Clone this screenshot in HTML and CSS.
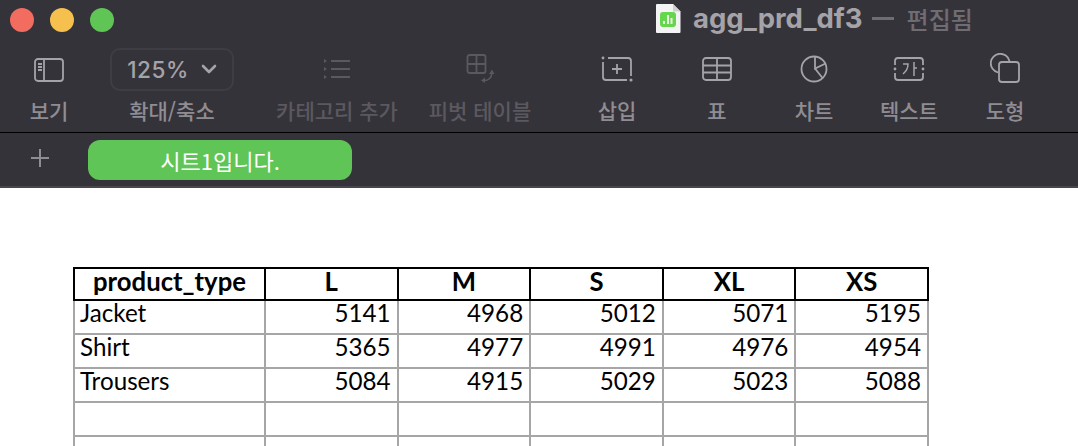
FILE: index.html
```html
<!DOCTYPE html>
<html lang="ko">
<head>
    <meta charset="utf-8">
    <title>agg_prd_df3</title>
    <link rel="stylesheet" href="styles.css">
</head>
<body>
    <header class="window-top">
        <div class="title-bar">
            <div class="lights">
                <span class="light red"></span>
                <span class="light yellow"></span>
                <span class="light green"></span>
            </div>
            <div class="doc-title">
                <svg class="doc-icon" width="25" height="29" viewBox="0 0 25 29">
                    <path d="M1 0H17L24.500 7.500V28a1 1 0 0 1-1 1H1a1 1 0 0 1-1-1V1a1 1 0 0 1 1-1Z" fill="#f4f4f4"/>
                    <path d="M17 0V7.500H24.500Z" fill="#d0d0d0"/>
                    <rect x="4" y="8" width="16" height="15" rx="3" fill="#66d64f"/>
                    <path d="M8 20v-3M12 20v-9M15.500 20v-6" stroke="#e8f8e0" stroke-width="2"/>
                </svg>
                <span class="doc-name">agg_prd_df3</span>
                <span class="doc-dash"></span>
                <span class="doc-state">편집됨</span>
            </div>
        </div>

        <div class="toolbar">
            <div class="tool tool-view">
                <svg width="30" height="24" viewBox="0 0 30 24" fill="none" stroke="currentColor" stroke-width="1.800">
                    <rect x="1" y="1" width="28" height="22" rx="3"/>
                    <path d="M10 1V23M4 6H8M4 9H8M4 12H8"/>
                </svg>
                <span class="tool-label">보기</span>
            </div>
            <div class="tool tool-zoom">
                <div class="zoom-box">125%
                    <svg width="16" height="11" viewBox="0 0 16 11" fill="none" stroke="currentColor" stroke-width="2.600" stroke-linecap="round" stroke-linejoin="round">
                        <path d="M2 2L8 8L14 2"/>
                    </svg>
                </div>
                <span class="tool-label">확대/축소</span>
            </div>
            <div class="tool tool-category off">
                <svg width="26" height="20" viewBox="0 0 26 20" fill="currentColor">
                    <path d="M0 0L3 2L0 4ZM0 8L3 10L0 12ZM0 16L3 18L0 20Z"/>
                    <rect x="7" y="1" width="19" height="2"/>
                    <rect x="7" y="9" width="19" height="2"/>
                    <rect x="7" y="17" width="19" height="2"/>
                </svg>
                <span class="tool-label">카테고리 추가</span>
            </div>
            <div class="tool tool-pivot off">
                <svg width="30" height="30" viewBox="0 0 30 30" fill="none" stroke="currentColor" stroke-width="1.800">
                    <rect x="2.500" y="1" width="18" height="18" rx="2"/>
                    <path d="M11.500 1V19M2.500 10H20.500"/>
                    <path d="M19 26.500Q26 26.500 27 19" stroke-width="1.600"/>
                    <path d="M24 20L27 15.500L29.500 20ZM20 23.500V29L16 26.500Z" fill="currentColor" stroke="none"/>
                </svg>
                <span class="tool-label">피벗 테이블</span>
            </div>
            <div class="tool tool-insert">
                <svg width="32" height="26" viewBox="0 0 32 26" fill="none" stroke="currentColor" stroke-width="1.800">
                    <path d="M2 6V21Q2 24 5 24H26M7 2H27Q30 2 30 5V20"/>
                    <path d="M16 8V18M11 13H21"/>
                    <circle cx="2" cy="2" r="1.400" fill="currentColor" stroke="none"/>
                    <circle cx="30" cy="24" r="1.600" fill="currentColor" stroke="none"/>
                </svg>
                <span class="tool-label">삽입</span>
            </div>
            <div class="tool tool-table">
                <svg width="30" height="24" viewBox="0 0 30 24" fill="none" stroke="currentColor" stroke-width="1.800">
                    <rect x="1" y="1" width="28" height="22" rx="3"/>
                    <path d="M1 8.500H29M1 15.500H29M15 1V23"/>
                </svg>
                <span class="tool-label">표</span>
            </div>
            <div class="tool tool-chart">
                <svg width="28" height="28" viewBox="0 0 28 28" fill="none" stroke="currentColor" stroke-width="1.800">
                    <circle cx="14" cy="14" r="12.500"/>
                    <path d="M15 2V13.500L25.500 8.500M15 13.500L22.500 23"/>
                </svg>
                <span class="tool-label">차트</span>
            </div>
            <div class="tool tool-text">
                <svg width="32" height="24" viewBox="0 0 32 24" fill="none" stroke="currentColor" stroke-width="1.800">
                    <path d="M2 8V4Q2 1 5 1H27Q30 1 30 4V8M2 16V20Q2 23 5 23H27Q30 23 30 20V16"/>
                    <circle cx="2" cy="12" r="1.400" fill="currentColor" stroke="none"/>
                    <circle cx="30" cy="12" r="1.400" fill="currentColor" stroke="none"/>
                    <path d="M10 7H15Q15 13 10 17M21 5V19M21 11H24" stroke-width="1.500"/>
                </svg>
                <span class="tool-label">텍스트</span>
            </div>
            <div class="tool tool-shape">
                <svg width="30" height="30" viewBox="0 0 30 30" fill="none" stroke="currentColor" stroke-width="1.800">
                    <path d="M8 19.500A9.500 9.500 0 1 1 19.500 8"/>
                    <rect x="9" y="9" width="20" height="20" rx="3"/>
                </svg>
                <span class="tool-label">도형</span>
            </div>
        </div>

        <div class="sheet-tabs">
            <svg class="add-sheet" width="20" height="20" viewBox="0 0 20 20" stroke="currentColor" stroke-width="2">
                <path d="M10 1V19M1 10H19"/>
            </svg>
            <div class="sheet-tab">시트1입니다.</div>
        </div>
    </header>

    <main class="canvas">
        <table class="data-table">
            <colgroup>
                <col class="col-type">
                <col class="col-num">
                <col class="col-num">
                <col class="col-num">
                <col class="col-num">
                <col class="col-num">
            </colgroup>
            <thead>
                <tr>
                    <th>product_type</th>
                    <th>L</th>
                    <th>M</th>
                    <th>S</th>
                    <th>XL</th>
                    <th>XS</th>
                </tr>
            </thead>
            <tbody>
                <tr><td>Jacket</td><td>5141</td><td>4968</td><td>5012</td><td>5071</td><td>5195</td></tr>
                <tr><td>Shirt</td><td>5365</td><td>4977</td><td>4991</td><td>4976</td><td>4954</td></tr>
                <tr><td>Trousers</td><td>5084</td><td>4915</td><td>5029</td><td>5023</td><td>5088</td></tr>
                <tr><td></td><td></td><td></td><td></td><td></td><td></td></tr>
                <tr><td></td><td></td><td></td><td></td><td></td><td></td></tr>
            </tbody>
        </table>
    </main>
</body>
</html>
```

FILE: styles.css
```css
html, body {
    margin: 0;
    height: 446px;
    overflow: hidden;
    background: #fff;
}

/* Window chrome */
.window-top {
    background: #35333a;
    color: #a5a3a8;
    font-family: "Noto Sans CJK KR", "Inter", sans-serif;
}

.title-bar {
    height: 40px;
    display: flex;
    align-items: flex-start;
}

.lights {
    display: flex;
    gap: 16px;
    padding: 8px 0 0 10px;
}

.light {
    width: 24px;
    height: 24px;
    border-radius: 50%;
}

.red { background: #f26c60; }
.yellow { background: #f6c04f; }
.green { background: #5fc554; }

.doc-title {
    display: flex;
    align-items: center;
    margin-left: 542px;
    height: 36px;
}

.doc-icon {
    margin-right: 12px;
}

.doc-name {
    font-family: "Inter", sans-serif;
    font-size: 27.500px;
    font-weight: 700;
    color: #a5a3a8;
}

.doc-dash {
    width: 22px;
    height: 3px;
    background: #6f6d73;
    margin: 0 13px 0 9px;
}

.doc-state {
    font-size: 24px;
    font-weight: 500;
    color: #6f6d73;
}

/* Toolbar */
.toolbar {
    height: 92px;
    display: flex;
    border-bottom: 1px solid #000;
}

.tool {
    height: 92px;
    box-sizing: border-box;
    display: flex;
    flex-direction: column;
    align-items: center;
    flex: none;
}

.tool svg {
    flex: none;
}

.tool-label {
    font-size: 21px;
    font-weight: 500;
    line-height: 26px;
    color: #8f8d92;
    white-space: nowrap;
    margin-top: auto;
    margin-bottom: 9px;
}

.off { color: #5b595f; }
.off .tool-label { color: #5b595f; }

.tool-view { width: 98px; padding-top: 18px; }
.tool-zoom { width: 148px; padding-top: 8px; }
.tool-category { width: 182px; padding-top: 19px; }
.tool-pivot { width: 104px; padding-top: 14px; }
.tool-insert { width: 100px; margin-left: 35px; padding-top: 16px; }
.tool-table { width: 100px; padding-top: 17px; }
.tool-chart { width: 94px; padding-top: 15px; }
.tool-text { width: 96px; padding-top: 17px; }
.tool-shape { width: 96px; padding-top: 13px; }

.zoom-box {
    width: 124px;
    height: 43px;
    box-sizing: border-box;
    border: 2px solid #3f3d44;
    border-radius: 10px;
    display: flex;
    align-items: center;
    justify-content: center;
    gap: 12px;
    font-family: "Inter", sans-serif;
    font-size: 22.500px;
    font-weight: 500;
    letter-spacing: 0.5px;
}

/* Sheet tabs */
.sheet-tabs {
    height: 53px;
    display: flex;
    align-items: flex-start;
    border-bottom: 2px solid #48474c;
}

.add-sheet {
    margin: 15px 0 0 30px;
    color: #8f8d92;
    flex: none;
}

.sheet-tab {
    width: 264px;
    height: 40px;
    margin: 7px 0 0 38px;
    background: #60c557;
    border-radius: 12px;
    color: #fff;
    font-size: 22px;
    font-weight: 400;
    line-height: 40px;
    text-align: center;
}

/* Sheet content */
.canvas {
    padding: 79px 0 0 73px;
}

.data-table {
    border-collapse: collapse;
    table-layout: fixed;
    width: 854px;
    font-family: "Lato", sans-serif;
    font-size: 24.200px;
    color: #000;
}

.col-type { width: 191px; }
.col-num { width: 132.600px; }

.data-table th {
    height: 30px;
    padding: 0;
    border: 2px solid #000;
    font-size: 25.700px;
    font-weight: 700;
    line-height: 24px;
    vertical-align: top;
}

.data-table td {
    height: 32px;
    padding: 0 6px 0 5px;
    border: 2px solid #a6a6a6;
    line-height: 24px;
    text-align: right;
    vertical-align: top;
}

.data-table td:first-child {
    text-align: left;
}
```
